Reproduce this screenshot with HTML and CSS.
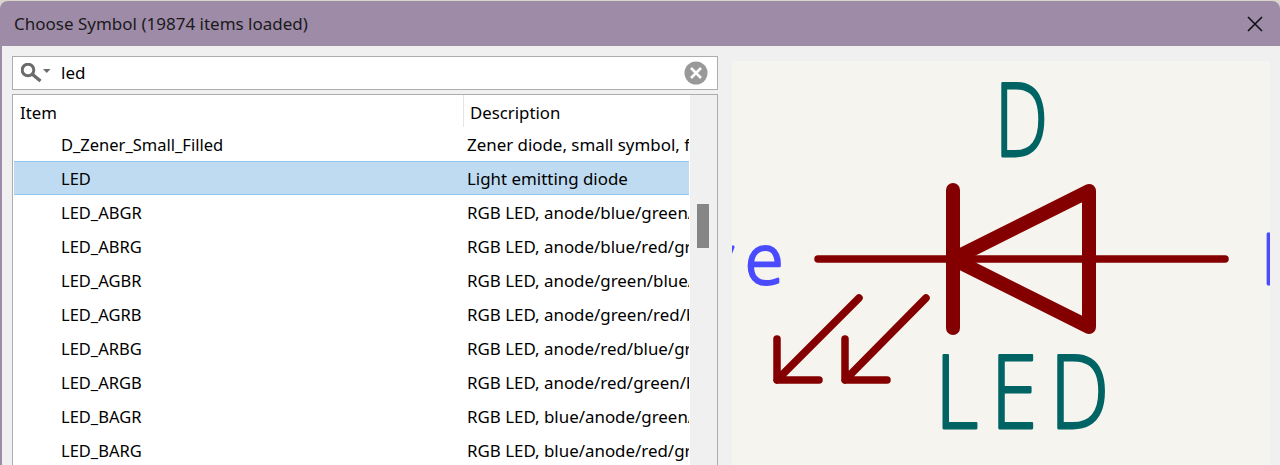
FILE: index.html
```html
<!DOCTYPE html>
<html lang="en">
<head>
<meta charset="utf-8">
<title>Choose Symbol</title>
<link rel="stylesheet" href="styles.css">
</head>
<body>
<div class="window">
  <header class="titlebar">
    <span class="title">Choose Symbol (19874 items loaded)</span>
    <svg class="close" width="16" height="16" viewBox="0 0 16 16"><path d="M1 1L15 15M15 1L1 15"/></svg>
  </header>
  <main class="content">
    <section class="left">
      <div class="search">
        <svg class="search-icon" width="31" height="20" viewBox="0 0 31 20">
          <circle class="lens" cx="7" cy="7" r="5.8"/>
          <path class="handle" d="M11 11L19.5 18"/>
          <path class="caret" d="M22 6H29.5L25.75 10Z"/>
        </svg>
        <span class="query">led</span>
        <svg class="clear" width="24" height="24" viewBox="0 0 24 24">
          <circle class="clear-bg" cx="12" cy="12" r="11.5"/>
          <path class="clear-x" d="M7 7L17 17M17 7L7 17"/>
        </svg>
      </div>
      <div class="list">
        <div class="list-main">
          <div class="list-head">
            <div class="head-item">Item</div>
            <div class="head-desc">Description</div>
          </div>
          <div class="row"><div class="name">D_Zener_Small_Filled</div><div class="desc">Zener diode, small symbol, filled</div></div>
          <div class="row selected"><div class="name">LED</div><div class="desc">Light emitting diode</div></div>
          <div class="row"><div class="name">LED_ABGR</div><div class="desc">RGB LED, anode/blue/green/red</div></div>
          <div class="row"><div class="name">LED_ABRG</div><div class="desc">RGB LED, anode/blue/red/green</div></div>
          <div class="row"><div class="name">LED_AGBR</div><div class="desc">RGB LED, anode/green/blue/red</div></div>
          <div class="row"><div class="name">LED_AGRB</div><div class="desc">RGB LED, anode/green/red/blue</div></div>
          <div class="row"><div class="name">LED_ARBG</div><div class="desc">RGB LED, anode/red/blue/green</div></div>
          <div class="row"><div class="name">LED_ARGB</div><div class="desc">RGB LED, anode/red/green/blue</div></div>
          <div class="row"><div class="name">LED_BAGR</div><div class="desc">RGB LED, blue/anode/green/red</div></div>
          <div class="row"><div class="name">LED_BARG</div><div class="desc">RGB LED, blue/anode/red/green</div></div>
        </div>
        <div class="scrollbar"><div class="thumb"></div></div>
      </div>
    </section>
    <section class="preview">
      <svg class="canvas" viewBox="732 61 538 404" width="538" height="404">
        <g class="sym-thin">
          <path d="M818 259H1225"/>
          <path d="M859 298L777 380M777 339V380H819"/>
          <path d="M926 298L845 380M845 339V380H887"/>
        </g>
        <g class="sym-thick">
          <path d="M953 190V328"/>
          <path d="M1089 191V327L953 259Z"/>
        </g>
        <text class="ref" transform="translate(1000 156) scale(.74 1)" x="-7" y="0">D</text>
        <text class="ref" transform="translate(941 428) scale(.82 1)" x="-7 61 133" y="0">LED</text>
        <text class="pin" x="701 745" y="284">ve</text>
        <text class="pin" x="1261" y="284">L</text>
      </svg>
    </section>
  </main>
</div>
</body>
</html>
```
FILE: styles.css
```css
html, body {
  margin: 0;
  height: 465px;
  overflow: hidden;
  background: #d9d5cb;
}
body {
  padding-top: 1px;
  box-sizing: border-box;
  font-family: "Noto Sans", "Open Sans", sans-serif;
  font-size: 16.8px;
  color: #000;
}
.window {
  height: 464px;
  background: #9e8ba8;
  border-radius: 8px 8px 0 0;
  overflow: hidden;
  display: flex;
  flex-direction: column;
}
.titlebar {
  height: 45px;
  flex: none;
  display: flex;
  align-items: center;
  justify-content: space-between;
  padding: 0 17px 0 14px;
}
.title {
  color: #1a1a1a;
  font-size: 17px;
}
.close path {
  stroke: #111;
  stroke-width: 1.6;
  fill: none;
}
.content {
  flex: 1;
  margin-left: 2px;
  background: #f0f0f0;
  display: flex;
  min-height: 0;
  padding: 10px 10px 0 10px;
  gap: 14px;
}
.left {
  width: 706px;
  flex: none;
  display: flex;
  flex-direction: column;
  gap: 4px;
}
.search {
  height: 34px;
  box-sizing: border-box;
  flex: none;
  background: #fff;
  border: 1px solid #adadad;
  display: flex;
  align-items: center;
  padding: 0 9px 0 8px;
}
.search-icon {
  flex: none;
  margin-right: 9px;
}
.lens {
  fill: none;
  stroke: #6b6b6b;
  stroke-width: 3;
}
.handle {
  stroke: #6b6b6b;
  stroke-width: 3.4;
  fill: none;
}
.caret {
  fill: #6b6b6b;
}
.query {
  flex: 1;
  font-size: 17px;
  padding-bottom: 2px;
}
.clear-bg {
  fill: #999;
}
.clear-x {
  stroke: #fff;
  stroke-width: 2.6;
  fill: none;
}
.list {
  flex: 1;
  min-height: 0;
  background: #fff;
  border: 1px solid #adadad;
  border-bottom: 0;
  display: flex;
  overflow: hidden;
}
.list-main {
  width: 675px;
  flex: none;
  overflow: hidden;
  padding-left: 1px;
}
.list-head {
  height: 32px;
  display: flex;
  align-items: center;
}
.head-item {
  width: 443px;
  height: 100%;
  padding-left: 6px;
  border-right: 1px solid #e5e5e5;
  line-height: 36px;
}
.head-desc {
  padding-left: 6px;
  line-height: 36px;
  height: 100%;
}
.row {
  height: 34px;
  box-sizing: border-box;
  display: flex;
  align-items: center;
  white-space: nowrap;
  border: 1px solid transparent;
  border-width: 1px 0;
}
.row.selected {
  background: #bfdbf1;
  border-color: #8fc6f2;
}
.name {
  width: 406px;
  flex: none;
  padding-left: 47px;
  font-size: 16.5px;
}
.desc {
  overflow: hidden;
  flex: 1;
  font-size: 16.9px;
}
.scrollbar {
  flex: 1;
  background: #f0f0f0;
  padding: 109px 8px 0 7px;
  margin-left: 1px;
}
.thumb {
  height: 44px;
  background: #868686;
}
.preview {
  width: 538px;
  flex: none;
  margin-top: 5px;
  background: #f5f4ef;
  overflow: hidden;
}
.canvas {
  display: block;
}
.sym-thin path, .sym-thick path {
  fill: none;
  stroke: #840000;
  stroke-linecap: round;
  stroke-linejoin: round;
}
.sym-thin path {
  stroke-width: 7.5;
}
.sym-thick path {
  stroke-width: 14;
}
.ref {
  font-family: "Open Sans", sans-serif;
  font-weight: 300;
  font-size: 102px;
  fill: #006464;
  stroke: #006464;
  stroke-width: 2.8;
  stroke-linejoin: round;
}
.pin {
  font-family: "Open Sans", sans-serif;
  font-weight: 300;
  font-size: 70px;
  fill: #4a4aff;
  stroke: #4a4aff;
  stroke-width: 2.8;
  stroke-linejoin: round;
}
```
